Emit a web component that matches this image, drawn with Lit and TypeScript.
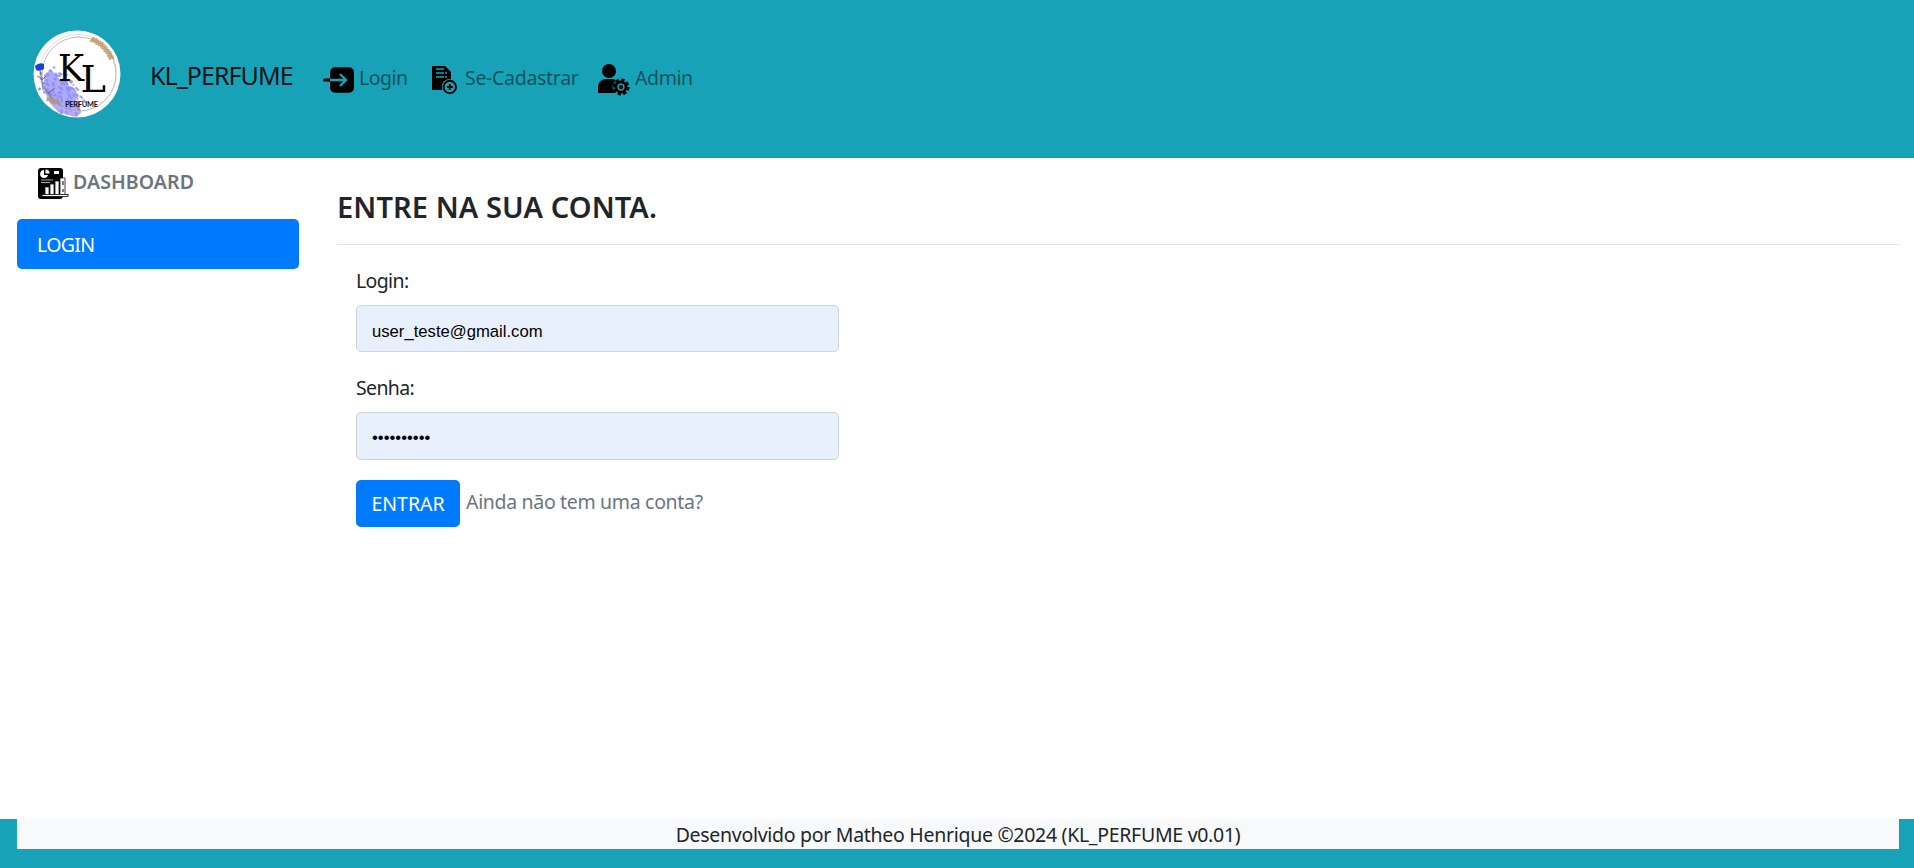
import { LitElement, html, css, svg } from "lit";
import { customElement } from "lit/decorators.js";

const spatter = Array.from({ length: 300 }, (_, i) => {
  const t = ((i * 37) % 300) / 300;
  const a = i * 2.4;
  const r = 8 + ((i * 53) % 80) / 10;
  return { x: 19 + t * 18 + Math.cos(a) * r, y: 51 + t * 22 + Math.sin(a) * r };
});
const gold = Array.from({ length: 80 }, (_, i) => {
  const a = -1.18 + (i / 80) * 0.78;
  const r = 35.5 + ((i * 29) % 50) / 10;
  return { x: 44 + Math.cos(a) * r, y: 44 + Math.sin(a) * r };
});

@customElement("app-root")
export class AppRoot extends LitElement {
  static styles = css`
    :host { display: flex; flex-direction: column; height: 868px; overflow: hidden; background: #fff; color: #212529;
      font: 19.5px/30px "Noto Sans", "Open Sans", sans-serif; letter-spacing: -0.29px; }
    * { box-sizing: border-box; }
    a { text-decoration: none; color: inherit; white-space: nowrap; }
    svg { display: block; flex: none; letter-spacing: 0; }
    header { height: 158px; flex: none; background: #17a2b8; display: flex; align-items: flex-start; padding: 30px 0 0 33px; }
    .brand { font-size: 25px; line-height: 38px; color: #000000e6; margin: 26px 0 0 29px; width: 173px; letter-spacing: -0.95px; }
    .nav { display: flex; margin-top: 33px; }
    .item { display: flex; color: #00000080; height: 36px; }
    .item svg { margin-top: 1px; }
    .login { width: 108px; gap: 4px; letter-spacing: -0.5px; }
    .signup { width: 167px; gap: 7px; letter-spacing: -0.3px; }
    .admin { gap: 5px; letter-spacing: -0.4px; }
    .main { flex: 1; display: flex; min-height: 0; }
    aside { width: 282px; margin-left: 17px; flex: none; }
    .dash { display: flex; gap: 4px; padding: 9px 0 0 21px; height: 61px; color: #6c757d; font-weight: 600; letter-spacing: 0.1px; }
    .active { display: block; height: 50px; border-radius: 5px; background: #007bff; color: #fff; padding: 11px 20px; letter-spacing: -0.65px; }
    section { flex: 1; margin: 0 15px 0 38px; }
    h1 { font-size: 29px; line-height: 36px; font-weight: 600; margin: 31px 0 0; height: 55px; letter-spacing: 0.1px; }
    .rule { border-top: 1px solid #e5e5e5; margin-bottom: 20px; }
    form { margin-left: 19px; width: 483px; }
    label { display: block; height: 40px; padding-top: 1px; letter-spacing: -0.63px; }
    input { display: block; width: 483px; height: 47px; border: 1px solid #ced4da; border-radius: 5px; background: #e8f0fe;
      padding: 6px 15px 0; font: 16.67px "Liberation Sans", Arial, sans-serif; color: #000; margin-bottom: 20px; outline: 0; }
    input[type="password"] { height: 48px; padding-top: 4px; }
    .actions { display: flex; gap: 6px; }
    button { width: 104px; height: 47px; border: 0; border-radius: 5px; background: #007bff; color: #fff; font: inherit; padding: 1px 0 0; letter-spacing: 0; }
    .more { color: #6c757d; margin-top: 7px; letter-spacing: -0.33px; }
    footer { height: 49px; flex: none; background: #17a2b8; padding: 0 15px 0 17px; text-align: center; }
    .credit { background: #f8f9fa; height: 30px; padding-top: 1px; }
  `;

  render() {
    return html`
      <header>
        <svg width="88" height="88" viewBox="0 0 88 88">
          <clipPath id="disc"><circle cx="44" cy="44" r="43.5" /></clipPath>
          <circle cx="44" cy="44" r="43.5" fill="#fff" />
          <g clip-path="url(#disc)">
            <path d="M11 45l5-4 7 2 4 7 7 2 3 7 5 3 1 8 4 7 1 6-5 4-8-2-10-3-9-10-5-13z" fill="#8a88f7" opacity=".7" />
            ${spatter.map((p) => svg`<circle cx=${p.x} cy=${p.y} r="1.1" fill="#8f8dfa" opacity=".7"/>`)}
          </g>
          <circle cx="46" cy="44" r="37" fill="none" stroke="#a79a99" stroke-width=".7" />
          <circle cx="45" cy="43" r="38.5" fill="none" stroke="#cfc8c5" stroke-width=".6" />
          ${gold.map((p) => svg`<circle cx=${p.x} cy=${p.y} r=".9" fill="#b9935a" opacity=".75"/>`)}
          <path d="M2 36q4-4 9-2l0 5q-5 3-8 1z" fill="#1742dc" />
          <path d="M7 40l3 18M8 48l-4-2M9 50l4-4M10 56l11 15M15 63l7-5" fill="none" stroke="#5d5780" stroke-width=".8" />
          <path d="M13 67l9 2 7 4-6 1-7-3z" fill="#bb9670" />
          <g font-family="DejaVu Serif, serif" font-size="37" fill="#000">
            <text x="25" y="51" textLength="26" lengthAdjust="spacingAndGlyphs">K</text>
            <text x="47.5" y="62" textLength="25.5" lengthAdjust="spacingAndGlyphs">L</text>
          </g>
          <text x="32" y="77" font-family="Lato, sans-serif" font-weight="700" font-size="7.4" textLength="33" fill="#111">PERFUME</text>
        </svg>
        <a class="brand">KL_PERFUME</a>
        <nav class="nav">
          <a class="item login"><svg width="32" height="32" viewBox="0 0 32 32">
            <rect x="7" y="3.3" width="24" height="25.4" rx="5" /><path d="M1.5 16h7" stroke="#000" stroke-width="3" stroke-linecap="round" />
            <path d="M7 16h16M17 10l6 6-6 6" fill="none" stroke="#17a2b8" stroke-width="2.4" />
          </svg><span>Login</span></a>
          <a class="item signup"><svg width="27" height="32" viewBox="0 0 27 32">
            <path d="M1 2h13l6 6v18H1z" /><path d="M5 5h8M5 9h8m1 0h2M5 13h8m1 0h2" stroke="#17a2b8" stroke-width="1.7" />
            <circle cx="18.8" cy="23" r="8" fill="#17a2b8" /><circle cx="18.8" cy="23" r="6.2" fill="none" stroke="#000" stroke-width="2" />
            <path d="M18.8 20v6M15.800 23h6" stroke="#000" stroke-width="2" />
          </svg><span>Se-Cadastrar</span></a>
          <a class="item admin"><svg width="32" height="32" viewBox="0 0 32 32">
            <circle cx="11" cy="7" r="7" /><path d="M0 29v-6c0-5 4-8 8-8h6c3 0 5 2 6 5l-4 4 2 5z" />
            <circle cx="23" cy="23" r="9" fill="#17a2b8" opacity=".5" />
            <circle cx="23" cy="23" r="6.8" fill="none" stroke="#000" stroke-width="3.6" stroke-dasharray="3.2 2.14" />
            <circle cx="23" cy="23" r="5" fill="none" stroke="#000" stroke-width="3" /><circle cx="23" cy="23" r="3.4" fill="#17a2b8" /><circle cx="23" cy="23" r="2.2" />
          </svg><span>Admin</span></a>
        </nav>
      </header>
      <div class="main">
        <aside>
          <a class="dash"><svg width="31" height="32" viewBox="0 0 31 32">
            <rect x="0" y="1" width="25" height="31" rx="3" />
            <path d="M6 3a4 4 0 1 0 4 5H6z" fill="#fff" /><path d="M7.5 2.5v4h4a4 4 0 0 0-4-4z" fill="#fff" />
            <rect x="16" y="4" width="5" height="3" fill="#fff" /><path d="M3 13h12M3 15.5h9" stroke="#aaa" stroke-width="1.2" />
            <path d="M7 28v-8h4v8M12 28V17h4v11M17 28V14h4v14M22 28V11h5v17" fill="#fff" stroke="#111" stroke-width=".8" />
            <path d="M25 14v4m0 4v3" stroke="#555" stroke-width="1.5" /><rect x="4" y="27.5" width="26" height="2" fill="#fff" stroke="#000" stroke-width=".8" />
          </svg><span>DASHBOARD</span></a>
          <a class="active">LOGIN</a>
        </aside>
        <section>
          <h1>ENTRE NA SUA CONTA.</h1>
          <div class="rule"></div>
          <form>
            <label>Login:</label>
            <input type="text" .value=${"user_teste@gmail.com"} />
            <label>Senha:</label>
            <input type="password" .value=${"1234567890"} />
            <div class="actions"><button type="button">ENTRAR</button><a class="more">Ainda não tem uma conta?</a></div>
          </form>
        </section>
      </div>
      <footer><div class="credit">Desenvolvido por Matheo Henrique ©2024 (KL_PERFUME v0.01)</div></footer>
    `;
  }
}
